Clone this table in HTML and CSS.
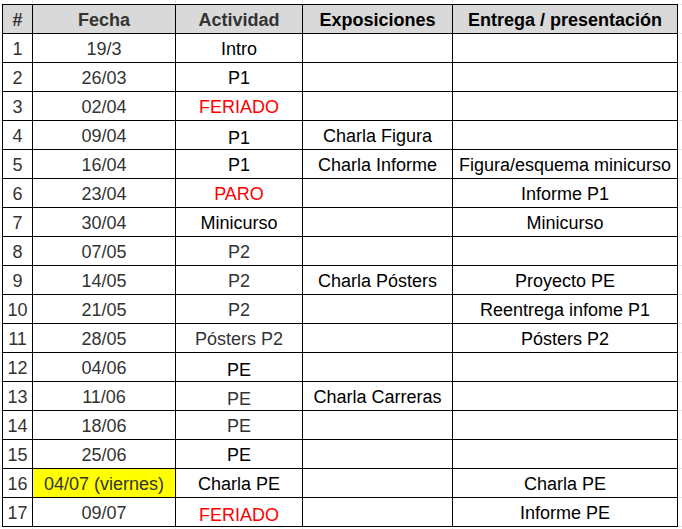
FILE: index.html
```html
<!DOCTYPE html>
<html lang="es">
<head>
<meta charset="utf-8">
<link rel="stylesheet" href="styles.css">
</head>
<body>
<div class="sheet">
<table class="plan">
<colgroup>
<col class="c-num"><col class="c-date"><col class="c-act"><col class="c-exp"><col class="c-ent">
</colgroup>
<thead>
<tr><th class="g">#</th><th class="g">Fecha</th><th class="g">Actividad</th><th>Exposiciones</th><th>Entrega / presentación</th></tr>
</thead>
<tbody>
<tr><td class="g">1</td><td class="g">19/3</td><td>Intro</td><td></td><td></td></tr>
<tr><td class="g">2</td><td class="g">26/03</td><td>P1</td><td></td><td></td></tr>
<tr><td class="g">3</td><td class="g">02/04</td><td class="red">FERIADO</td><td></td><td></td></tr>
<tr><td class="g">4</td><td class="g">09/04</td><td class="low">P1</td><td>Charla Figura</td><td></td></tr>
<tr><td class="g">5</td><td class="g">16/04</td><td>P1</td><td>Charla Informe</td><td>Figura/esquema minicurso</td></tr>
<tr><td class="g">6</td><td class="g">23/04</td><td class="red">PARO</td><td></td><td>Informe P1</td></tr>
<tr><td class="g">7</td><td class="g">30/04</td><td>Minicurso</td><td></td><td>Minicurso</td></tr>
<tr><td class="g">8</td><td class="g">07/05</td><td class="g">P2</td><td></td><td></td></tr>
<tr><td class="g">9</td><td class="g">14/05</td><td class="g">P2</td><td>Charla Pósters</td><td>Proyecto PE</td></tr>
<tr><td class="g">10</td><td class="g">21/05</td><td class="g">P2</td><td></td><td>Reentrega infome P1</td></tr>
<tr><td class="g">11</td><td class="g">28/05</td><td class="g">Pósters P2</td><td></td><td>Pósters P2</td></tr>
<tr><td class="g">12</td><td class="g">04/06</td><td class="low">PE</td><td></td><td></td></tr>
<tr><td class="g">13</td><td class="g">11/06</td><td class="g low">PE</td><td>Charla Carreras</td><td></td></tr>
<tr><td class="g">14</td><td class="g">18/06</td><td class="g">PE</td><td></td><td></td></tr>
<tr><td class="g">15</td><td class="g">25/06</td><td>PE</td><td></td><td></td></tr>
<tr><td class="g">16</td><td class="g hl">04/07 (viernes)</td><td>Charla PE</td><td></td><td>Charla PE</td></tr>
<tr><td class="g">17</td><td class="g">09/07</td><td class="red low">FERIADO</td><td></td><td>Informe PE</td></tr>
</tbody>
</table>
</div>
</body>
</html>
```
FILE: styles.css
```css
html, body {
  margin: 0;
  padding: 0;
  background: #fff;
}

.sheet {
  box-sizing: border-box;
  width: 682px;
  height: 529px;
  padding: 4px 0 0 2px;
  overflow: hidden;
  background-color: #fff;
  background-image:
    linear-gradient(#e3e3e3, #e3e3e3),
    linear-gradient(#e3e3e3, #e3e3e3),
    linear-gradient(#e3e3e3, #e3e3e3),
    linear-gradient(#e3e3e3, #e3e3e3),
    repeating-linear-gradient(to bottom, #e3e3e3 0 1px, transparent 1px 29px);
  background-size: 1px 100%, 1px 100%, 1px 100%, 1px 100%, 100% 100%;
  background-position: 32px 0, 175px 0, 302px 0, 452px 0, 0 4px;
  background-repeat: no-repeat, no-repeat, no-repeat, no-repeat, repeat;
}

.plan {
  border-collapse: collapse;
  table-layout: fixed;
  width: 676px;
  background: #fff;
  font-family: "Liberation Sans", Arial, sans-serif;
  font-size: 18px;
  color: #000;
}

.c-num { width: 30px; }
.c-date { width: 143px; }
.c-act { width: 127px; }
.c-exp { width: 150px; }
.c-ent { width: 225px; }

.plan th,
.plan td {
  border: 1px solid #000;
  height: 29px;
  box-sizing: border-box;
  padding: 0 2px 3px;
  line-height: 20px;
  text-align: center;
  vertical-align: bottom;
  white-space: nowrap;
  overflow: hidden;
}

.plan th {
  background: #d9d9d9;
  font-weight: bold;
}

.plan .g { color: #333; }
.plan .red { color: #ff0000; }
.plan .hl { background: #ffff00; }
.plan .low { padding-bottom: 1px; }
```
